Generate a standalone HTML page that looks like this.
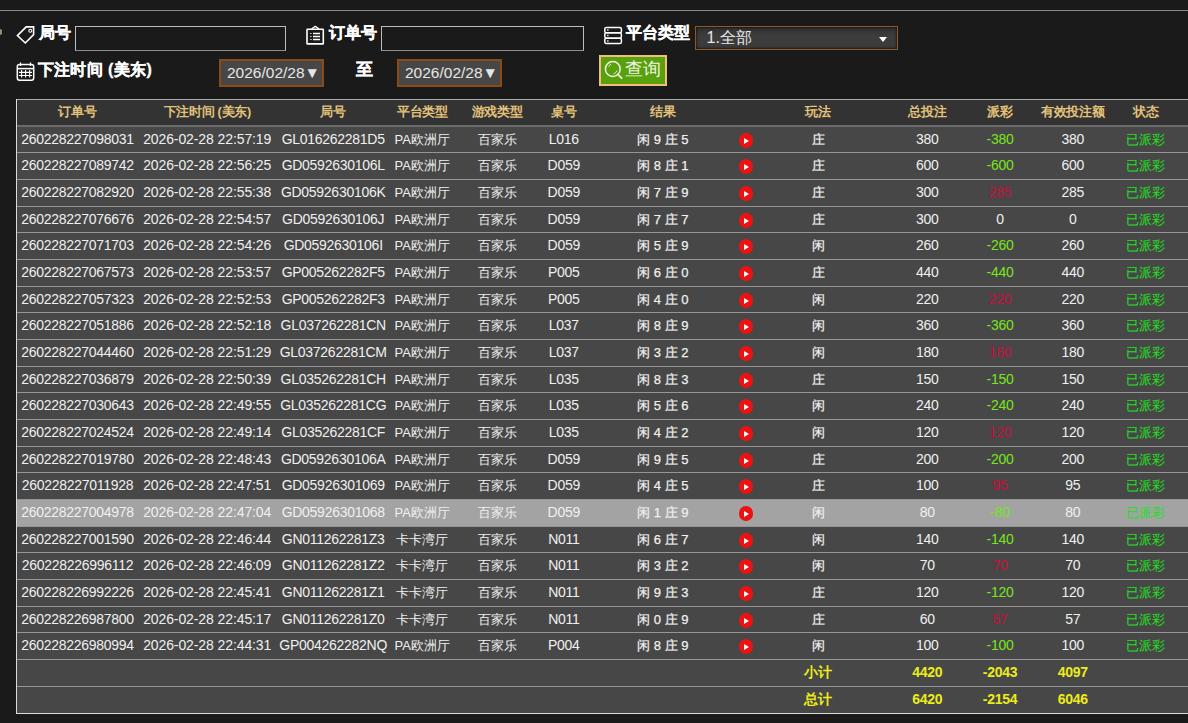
<!DOCTYPE html>
<html><head><meta charset="utf-8">
<style>
*{margin:0;padding:0;box-sizing:border-box}
html,body{width:1188px;height:723px;overflow:hidden;background:#1b1a1a;font-family:"Liberation Sans",sans-serif;color:#fff}
.abs{position:absolute}
.topline{position:absolute;left:0;top:10px;width:1188px;height:1px;background:#8a8a8a}
.lbl{position:absolute;font-weight:bold;font-size:16px;color:#fff;line-height:18px;white-space:nowrap;-webkit-text-stroke:0.3px #fff}
.inp{position:absolute;height:25px;border:1px solid #bdbdbd;border-bottom-color:#8d8d8d;background:transparent}
.date{position:absolute;height:28px;width:105px;border:2px solid #8a4b14;background:#474747;color:#e6e6e6;font-size:15.5px;line-height:24px;text-align:left;padding-left:6px;white-space:nowrap}
.sel{position:absolute;left:695px;top:26px;width:203px;height:24px;border:1px solid #8b5a2b;background:linear-gradient(#2e2e2e,#3d3d3d 40%,#3a3a3a);box-shadow:inset 0 0 3px #000;color:#e8e8e8;font-size:16px;line-height:22px;padding-left:10.5px}
.btn{position:absolute;left:599px;top:55px;width:68px;height:31px;border:2px solid #f0bf7c;background:#58a10c;color:#f2f2e6;font-size:18px;line-height:26px}
.tbl{position:absolute;left:16px;top:99px;width:1172px}
.hdr{position:absolute;left:16px;top:99px;width:1172px;height:26px;background:#333;border-top:1px solid #a9a9a9}
.hdr .c{color:#e3c27a;font-weight:bold;line-height:25px;font-size:12.6px}
.hline{position:absolute;left:16px;top:125px;width:1172px;height:2px;background:#6a6a6a}
.row{position:absolute;left:16px;width:1172px;background:#474747}
.row.hl{background:#a3a3a3}
.ln{position:absolute;left:16px;width:1172px;height:1px;background:#959595}
.c{position:absolute;top:0;width:130px;text-align:center;font-size:14px;letter-spacing:-0.28px;line-height:24px;white-space:nowrap;color:#f0f0f0}
.res{font-size:13px;letter-spacing:0;top:1px;-webkit-text-stroke:0.25px #f0f0f0}
.cj{font-size:13px;letter-spacing:0;top:1px}
.dt{letter-spacing:-0.1px}
.g{color:#78e61c}
.r{color:#c8103a}
.st{color:#20e020}
.ft .c{color:#ecec18;font-weight:bold}
.play{position:absolute;top:6.4px;width:14.5px;height:14.5px;border-radius:50%;background:#ee1111}
.play:after{content:"";position:absolute;left:5.2px;top:4.2px;border-left:5px solid #fff;border-top:3px solid transparent;border-bottom:3px solid transparent}
.lb{position:absolute;left:16px;top:99px;width:1px;height:615px;background:#dcdcdc}
.bb{position:absolute;left:16px;width:1172px;height:1px;background:#dcdcdc}
</style></head><body>
<div class="topline"></div>
<div class="abs" style="left:0;top:29px;width:2px;height:6px;background:#a08a6a;border-radius:0 3px 3px 0"></div>

<svg class="abs" style="left:15px;top:24px" width="22" height="22" viewBox="15 24 22 22" fill="none" stroke="#fff" stroke-width="1.6">
<path d="M17.4 35.6 L26.2 26.9 L33.6 26.9 L33.6 34.6 L25.3 43 Z" stroke-linejoin="miter"/>
<circle cx="30.3" cy="30.8" r="1.5" stroke-width="1.1"/>
</svg>
<div class="lbl" style="left:39px;top:24px">局号</div>
<div class="inp" style="left:75px;top:26px;width:211px"></div>

<svg class="abs" style="left:304px;top:24px" width="22" height="22" viewBox="304 24 22 22" fill="none" stroke="#fff" stroke-width="1.6">
<rect x="307" y="29.2" width="16.3" height="14.7" rx="0.5"/>
<path d="M311.5 29 Q313 28 314 27.2 Q315.3 25.8 316.6 27.2 Q317.6 28 319 29" stroke-width="1.4"/>
<path d="M313 33.5h7M313 36.5h7M313 39.5h7" stroke-width="1.3"/>
<path d="M310.3 33.5h1.2M310.3 36.5h1.2M310.3 39.5h1.2" stroke-width="1.2"/>
</svg>
<div class="lbl" style="left:329px;top:24px">订单号</div>
<div class="inp" style="left:381px;top:26px;width:203px"></div>

<svg class="abs" style="left:602px;top:24px" width="22" height="22" viewBox="602 24 22 22" fill="none" stroke="#fff" stroke-width="1.5">
<rect x="604.8" y="27.4" width="16.6" height="5.4" rx="1.6"/>
<rect x="604.8" y="32.8" width="16.6" height="5.4" rx="1.6"/>
<rect x="604.8" y="38.2" width="16.6" height="5.4" rx="1.6"/>
<path d="M607.2 30.1h1.3M607.2 35.5h1.3M607.2 40.9h1.3" stroke-width="1.5"/>
</svg>
<div class="lbl" style="left:626px;top:24px">平台类型</div>
<div class="sel">1.全部<span class="abs" style="left:183px;top:10px;border-top:5px solid #fff;border-left:4.5px solid transparent;border-right:4.5px solid transparent"></span></div>

<svg class="abs" style="left:14px;top:60px" width="24" height="24" viewBox="14 60 24 24" fill="none" stroke="#fff" stroke-width="1.5">
<rect x="17.3" y="64.6" width="16.4" height="15.6" rx="2.2"/>
<path d="M17.5 68.6h16"/>
<path d="M20.5 62.5v3.5M30.5 62.5v3.5" stroke-width="1.3"/>
<path d="M19 72.4h13M19 75.5h13M21.6 70v7.5M25.6 70v7.5M29.7 70v7.5" stroke-width="1.1"/>
</svg>
<div class="lbl" style="left:37.5px;top:61px;letter-spacing:0.4px">下注时间 (美东)</div>
<div class="date" style="left:219px;top:59px">2026/02/28▼</div>
<div class="lbl" style="left:355.5px;top:60px;font-size:17px;line-height:20px">至</div>
<div class="date" style="left:397px;top:59px">2026/02/28▼</div>
<div class="btn">
<svg class="abs" style="left:-2px;top:0px" width="24" height="24" viewBox="599 57 24 24" fill="none" stroke="#f2f2e6" stroke-width="1.5">
<circle cx="612.8" cy="69" r="7.4"/>
<path d="M617.8 74.3 L622.2 78.6" stroke-width="1.7"/>
<path d="M608.6 66.8 Q609.5 64.8 611.2 64" stroke-width="0.9"/>
<path d="M613.5 74 Q616 73 617.2 70.6" stroke-width="0.9"/>
</svg>
<span class="abs" style="left:24px;top:-1px">查询</span>
</div>

<div class="hdr"><div class="c " style="left:-3.5px">订单号</div><div class="c " style="left:126.2px">下注时间 (美东)</div><div class="c " style="left:252.2px">局号</div><div class="c " style="left:341.3px">平台类型</div><div class="c " style="left:416.2px">游戏类型</div><div class="c " style="left:482.8px">桌号</div><div class="c " style="left:581.8px">结果</div><div class="c " style="left:737.0px">玩法</div><div class="c " style="left:846.3px">总投注</div><div class="c " style="left:919.0px">派彩</div><div class="c " style="left:991.8px">有效投注额</div><div class="c " style="left:1064.8px">状态</div></div>
<div class="row" style="top:127px;height:25px"><div class="c " style="left:-3.5px">260228227098031</div><div class="c dt" style="left:126.2px">2026-02-28 22:57:19</div><div class="c " style="left:252.2px">GL016262281D5</div><div class="c cj" style="left:341.3px">PA欧洲厅</div><div class="c cj" style="left:416.2px">百家乐</div><div class="c " style="left:482.8px">L016</div><div class="c res" style="left:581.8px">闲 9 庄 5</div><div class="play" style="left:722.5px"></div><div class="c res" style="left:737.0px">庄</div><div class="c " style="left:846.3px">380</div><div class="c g" style="left:919.0px">-380</div><div class="c " style="left:991.8px">380</div><div class="c st cj" style="left:1064.8px">已派彩</div></div>
<div class="ln" style="top:152px"></div>
<div class="row" style="top:153px;height:26px"><div class="c " style="left:-3.5px">260228227089742</div><div class="c dt" style="left:126.2px">2026-02-28 22:56:25</div><div class="c " style="left:252.2px">GD0592630106L</div><div class="c cj" style="left:341.3px">PA欧洲厅</div><div class="c cj" style="left:416.2px">百家乐</div><div class="c " style="left:482.8px">D059</div><div class="c res" style="left:581.8px">闲 8 庄 1</div><div class="play" style="left:722.5px"></div><div class="c res" style="left:737.0px">庄</div><div class="c " style="left:846.3px">600</div><div class="c g" style="left:919.0px">-600</div><div class="c " style="left:991.8px">600</div><div class="c st cj" style="left:1064.8px">已派彩</div></div>
<div class="ln" style="top:179px"></div>
<div class="row" style="top:180px;height:26px"><div class="c " style="left:-3.5px">260228227082920</div><div class="c dt" style="left:126.2px">2026-02-28 22:55:38</div><div class="c " style="left:252.2px">GD0592630106K</div><div class="c cj" style="left:341.3px">PA欧洲厅</div><div class="c cj" style="left:416.2px">百家乐</div><div class="c " style="left:482.8px">D059</div><div class="c res" style="left:581.8px">闲 7 庄 9</div><div class="play" style="left:722.5px"></div><div class="c res" style="left:737.0px">庄</div><div class="c " style="left:846.3px">300</div><div class="c r" style="left:919.0px">285</div><div class="c " style="left:991.8px">285</div><div class="c st cj" style="left:1064.8px">已派彩</div></div>
<div class="ln" style="top:206px"></div>
<div class="row" style="top:207px;height:25px"><div class="c " style="left:-3.5px">260228227076676</div><div class="c dt" style="left:126.2px">2026-02-28 22:54:57</div><div class="c " style="left:252.2px">GD0592630106J</div><div class="c cj" style="left:341.3px">PA欧洲厅</div><div class="c cj" style="left:416.2px">百家乐</div><div class="c " style="left:482.8px">D059</div><div class="c res" style="left:581.8px">闲 7 庄 7</div><div class="play" style="left:722.5px"></div><div class="c res" style="left:737.0px">庄</div><div class="c " style="left:846.3px">300</div><div class="c w" style="left:919.0px">0</div><div class="c " style="left:991.8px">0</div><div class="c st cj" style="left:1064.8px">已派彩</div></div>
<div class="ln" style="top:232px"></div>
<div class="row" style="top:233px;height:26px"><div class="c " style="left:-3.5px">260228227071703</div><div class="c dt" style="left:126.2px">2026-02-28 22:54:26</div><div class="c " style="left:252.2px">GD0592630106I</div><div class="c cj" style="left:341.3px">PA欧洲厅</div><div class="c cj" style="left:416.2px">百家乐</div><div class="c " style="left:482.8px">D059</div><div class="c res" style="left:581.8px">闲 5 庄 9</div><div class="play" style="left:722.5px"></div><div class="c res" style="left:737.0px">闲</div><div class="c " style="left:846.3px">260</div><div class="c g" style="left:919.0px">-260</div><div class="c " style="left:991.8px">260</div><div class="c st cj" style="left:1064.8px">已派彩</div></div>
<div class="ln" style="top:259px"></div>
<div class="row" style="top:260px;height:26px"><div class="c " style="left:-3.5px">260228227067573</div><div class="c dt" style="left:126.2px">2026-02-28 22:53:57</div><div class="c " style="left:252.2px">GP005262282F5</div><div class="c cj" style="left:341.3px">PA欧洲厅</div><div class="c cj" style="left:416.2px">百家乐</div><div class="c " style="left:482.8px">P005</div><div class="c res" style="left:581.8px">闲 6 庄 0</div><div class="play" style="left:722.5px"></div><div class="c res" style="left:737.0px">庄</div><div class="c " style="left:846.3px">440</div><div class="c g" style="left:919.0px">-440</div><div class="c " style="left:991.8px">440</div><div class="c st cj" style="left:1064.8px">已派彩</div></div>
<div class="ln" style="top:286px"></div>
<div class="row" style="top:287px;height:25px"><div class="c " style="left:-3.5px">260228227057323</div><div class="c dt" style="left:126.2px">2026-02-28 22:52:53</div><div class="c " style="left:252.2px">GP005262282F3</div><div class="c cj" style="left:341.3px">PA欧洲厅</div><div class="c cj" style="left:416.2px">百家乐</div><div class="c " style="left:482.8px">P005</div><div class="c res" style="left:581.8px">闲 4 庄 0</div><div class="play" style="left:722.5px"></div><div class="c res" style="left:737.0px">闲</div><div class="c " style="left:846.3px">220</div><div class="c r" style="left:919.0px">220</div><div class="c " style="left:991.8px">220</div><div class="c st cj" style="left:1064.8px">已派彩</div></div>
<div class="ln" style="top:312px"></div>
<div class="row" style="top:313px;height:26px"><div class="c " style="left:-3.5px">260228227051886</div><div class="c dt" style="left:126.2px">2026-02-28 22:52:18</div><div class="c " style="left:252.2px">GL037262281CN</div><div class="c cj" style="left:341.3px">PA欧洲厅</div><div class="c cj" style="left:416.2px">百家乐</div><div class="c " style="left:482.8px">L037</div><div class="c res" style="left:581.8px">闲 8 庄 9</div><div class="play" style="left:722.5px"></div><div class="c res" style="left:737.0px">闲</div><div class="c " style="left:846.3px">360</div><div class="c g" style="left:919.0px">-360</div><div class="c " style="left:991.8px">360</div><div class="c st cj" style="left:1064.8px">已派彩</div></div>
<div class="ln" style="top:339px"></div>
<div class="row" style="top:340px;height:26px"><div class="c " style="left:-3.5px">260228227044460</div><div class="c dt" style="left:126.2px">2026-02-28 22:51:29</div><div class="c " style="left:252.2px">GL037262281CM</div><div class="c cj" style="left:341.3px">PA欧洲厅</div><div class="c cj" style="left:416.2px">百家乐</div><div class="c " style="left:482.8px">L037</div><div class="c res" style="left:581.8px">闲 3 庄 2</div><div class="play" style="left:722.5px"></div><div class="c res" style="left:737.0px">闲</div><div class="c " style="left:846.3px">180</div><div class="c r" style="left:919.0px">180</div><div class="c " style="left:991.8px">180</div><div class="c st cj" style="left:1064.8px">已派彩</div></div>
<div class="ln" style="top:366px"></div>
<div class="row" style="top:367px;height:25px"><div class="c " style="left:-3.5px">260228227036879</div><div class="c dt" style="left:126.2px">2026-02-28 22:50:39</div><div class="c " style="left:252.2px">GL035262281CH</div><div class="c cj" style="left:341.3px">PA欧洲厅</div><div class="c cj" style="left:416.2px">百家乐</div><div class="c " style="left:482.8px">L035</div><div class="c res" style="left:581.8px">闲 8 庄 3</div><div class="play" style="left:722.5px"></div><div class="c res" style="left:737.0px">庄</div><div class="c " style="left:846.3px">150</div><div class="c g" style="left:919.0px">-150</div><div class="c " style="left:991.8px">150</div><div class="c st cj" style="left:1064.8px">已派彩</div></div>
<div class="ln" style="top:392px"></div>
<div class="row" style="top:393px;height:26px"><div class="c " style="left:-3.5px">260228227030643</div><div class="c dt" style="left:126.2px">2026-02-28 22:49:55</div><div class="c " style="left:252.2px">GL035262281CG</div><div class="c cj" style="left:341.3px">PA欧洲厅</div><div class="c cj" style="left:416.2px">百家乐</div><div class="c " style="left:482.8px">L035</div><div class="c res" style="left:581.8px">闲 5 庄 6</div><div class="play" style="left:722.5px"></div><div class="c res" style="left:737.0px">闲</div><div class="c " style="left:846.3px">240</div><div class="c g" style="left:919.0px">-240</div><div class="c " style="left:991.8px">240</div><div class="c st cj" style="left:1064.8px">已派彩</div></div>
<div class="ln" style="top:419px"></div>
<div class="row" style="top:420px;height:26px"><div class="c " style="left:-3.5px">260228227024524</div><div class="c dt" style="left:126.2px">2026-02-28 22:49:14</div><div class="c " style="left:252.2px">GL035262281CF</div><div class="c cj" style="left:341.3px">PA欧洲厅</div><div class="c cj" style="left:416.2px">百家乐</div><div class="c " style="left:482.8px">L035</div><div class="c res" style="left:581.8px">闲 4 庄 2</div><div class="play" style="left:722.5px"></div><div class="c res" style="left:737.0px">闲</div><div class="c " style="left:846.3px">120</div><div class="c r" style="left:919.0px">120</div><div class="c " style="left:991.8px">120</div><div class="c st cj" style="left:1064.8px">已派彩</div></div>
<div class="ln" style="top:446px"></div>
<div class="row" style="top:447px;height:25px"><div class="c " style="left:-3.5px">260228227019780</div><div class="c dt" style="left:126.2px">2026-02-28 22:48:43</div><div class="c " style="left:252.2px">GD0592630106A</div><div class="c cj" style="left:341.3px">PA欧洲厅</div><div class="c cj" style="left:416.2px">百家乐</div><div class="c " style="left:482.8px">D059</div><div class="c res" style="left:581.8px">闲 9 庄 5</div><div class="play" style="left:722.5px"></div><div class="c res" style="left:737.0px">庄</div><div class="c " style="left:846.3px">200</div><div class="c g" style="left:919.0px">-200</div><div class="c " style="left:991.8px">200</div><div class="c st cj" style="left:1064.8px">已派彩</div></div>
<div class="ln" style="top:472px"></div>
<div class="row" style="top:473px;height:26px"><div class="c " style="left:-3.5px">260228227011928</div><div class="c dt" style="left:126.2px">2026-02-28 22:47:51</div><div class="c " style="left:252.2px">GD05926301069</div><div class="c cj" style="left:341.3px">PA欧洲厅</div><div class="c cj" style="left:416.2px">百家乐</div><div class="c " style="left:482.8px">D059</div><div class="c res" style="left:581.8px">闲 4 庄 5</div><div class="play" style="left:722.5px"></div><div class="c res" style="left:737.0px">庄</div><div class="c " style="left:846.3px">100</div><div class="c r" style="left:919.0px">95</div><div class="c " style="left:991.8px">95</div><div class="c st cj" style="left:1064.8px">已派彩</div></div>
<div class="ln" style="top:499px"></div>
<div class="row hl" style="top:500px;height:26px"><div class="c " style="left:-3.5px">260228227004978</div><div class="c dt" style="left:126.2px">2026-02-28 22:47:04</div><div class="c " style="left:252.2px">GD05926301068</div><div class="c cj" style="left:341.3px">PA欧洲厅</div><div class="c cj" style="left:416.2px">百家乐</div><div class="c " style="left:482.8px">D059</div><div class="c res" style="left:581.8px">闲 1 庄 9</div><div class="play" style="left:722.5px"></div><div class="c res" style="left:737.0px">闲</div><div class="c " style="left:846.3px">80</div><div class="c g" style="left:919.0px">-80</div><div class="c " style="left:991.8px">80</div><div class="c st cj" style="left:1064.8px">已派彩</div></div>
<div class="ln" style="top:526px"></div>
<div class="row" style="top:527px;height:25px"><div class="c " style="left:-3.5px">260228227001590</div><div class="c dt" style="left:126.2px">2026-02-28 22:46:44</div><div class="c " style="left:252.2px">GN011262281Z3</div><div class="c cj" style="left:341.3px">卡卡湾厅</div><div class="c cj" style="left:416.2px">百家乐</div><div class="c " style="left:482.8px">N011</div><div class="c res" style="left:581.8px">闲 6 庄 7</div><div class="play" style="left:722.5px"></div><div class="c res" style="left:737.0px">闲</div><div class="c " style="left:846.3px">140</div><div class="c g" style="left:919.0px">-140</div><div class="c " style="left:991.8px">140</div><div class="c st cj" style="left:1064.8px">已派彩</div></div>
<div class="ln" style="top:552px"></div>
<div class="row" style="top:553px;height:26px"><div class="c " style="left:-3.5px">260228226996112</div><div class="c dt" style="left:126.2px">2026-02-28 22:46:09</div><div class="c " style="left:252.2px">GN011262281Z2</div><div class="c cj" style="left:341.3px">卡卡湾厅</div><div class="c cj" style="left:416.2px">百家乐</div><div class="c " style="left:482.8px">N011</div><div class="c res" style="left:581.8px">闲 3 庄 2</div><div class="play" style="left:722.5px"></div><div class="c res" style="left:737.0px">闲</div><div class="c " style="left:846.3px">70</div><div class="c r" style="left:919.0px">70</div><div class="c " style="left:991.8px">70</div><div class="c st cj" style="left:1064.8px">已派彩</div></div>
<div class="ln" style="top:579px"></div>
<div class="row" style="top:580px;height:26px"><div class="c " style="left:-3.5px">260228226992226</div><div class="c dt" style="left:126.2px">2026-02-28 22:45:41</div><div class="c " style="left:252.2px">GN011262281Z1</div><div class="c cj" style="left:341.3px">卡卡湾厅</div><div class="c cj" style="left:416.2px">百家乐</div><div class="c " style="left:482.8px">N011</div><div class="c res" style="left:581.8px">闲 9 庄 3</div><div class="play" style="left:722.5px"></div><div class="c res" style="left:737.0px">庄</div><div class="c " style="left:846.3px">120</div><div class="c g" style="left:919.0px">-120</div><div class="c " style="left:991.8px">120</div><div class="c st cj" style="left:1064.8px">已派彩</div></div>
<div class="ln" style="top:606px"></div>
<div class="row" style="top:607px;height:25px"><div class="c " style="left:-3.5px">260228226987800</div><div class="c dt" style="left:126.2px">2026-02-28 22:45:17</div><div class="c " style="left:252.2px">GN011262281Z0</div><div class="c cj" style="left:341.3px">卡卡湾厅</div><div class="c cj" style="left:416.2px">百家乐</div><div class="c " style="left:482.8px">N011</div><div class="c res" style="left:581.8px">闲 0 庄 9</div><div class="play" style="left:722.5px"></div><div class="c res" style="left:737.0px">庄</div><div class="c " style="left:846.3px">60</div><div class="c r" style="left:919.0px">57</div><div class="c " style="left:991.8px">57</div><div class="c st cj" style="left:1064.8px">已派彩</div></div>
<div class="ln" style="top:632px"></div>
<div class="row" style="top:633px;height:26px"><div class="c " style="left:-3.5px">260228226980994</div><div class="c dt" style="left:126.2px">2026-02-28 22:44:31</div><div class="c " style="left:252.2px">GP004262282NQ</div><div class="c cj" style="left:341.3px">PA欧洲厅</div><div class="c cj" style="left:416.2px">百家乐</div><div class="c " style="left:482.8px">P004</div><div class="c res" style="left:581.8px">闲 8 庄 9</div><div class="play" style="left:722.5px"></div><div class="c res" style="left:737.0px">闲</div><div class="c " style="left:846.3px">100</div><div class="c g" style="left:919.0px">-100</div><div class="c " style="left:991.8px">100</div><div class="c st cj" style="left:1064.8px">已派彩</div></div>
<div class="ln" style="top:659px"></div>
<div class="row ft" style="top:660px;height:26px"><div class="c " style="left:737.0px">小计</div><div class="c " style="left:846.3px">4420</div><div class="c " style="left:919.0px">-2043</div><div class="c " style="left:991.8px">4097</div></div>
<div class="ln" style="top:686px"></div>
<div class="row ft" style="top:687px;height:26px"><div class="c " style="left:737.0px">总计</div><div class="c " style="left:846.3px">6420</div><div class="c " style="left:919.0px">-2154</div><div class="c " style="left:991.8px">6046</div></div>
<div class="hline"></div>
<div class="lb"></div>
<div class="bb" style="top:713px"></div>
</body></html>
